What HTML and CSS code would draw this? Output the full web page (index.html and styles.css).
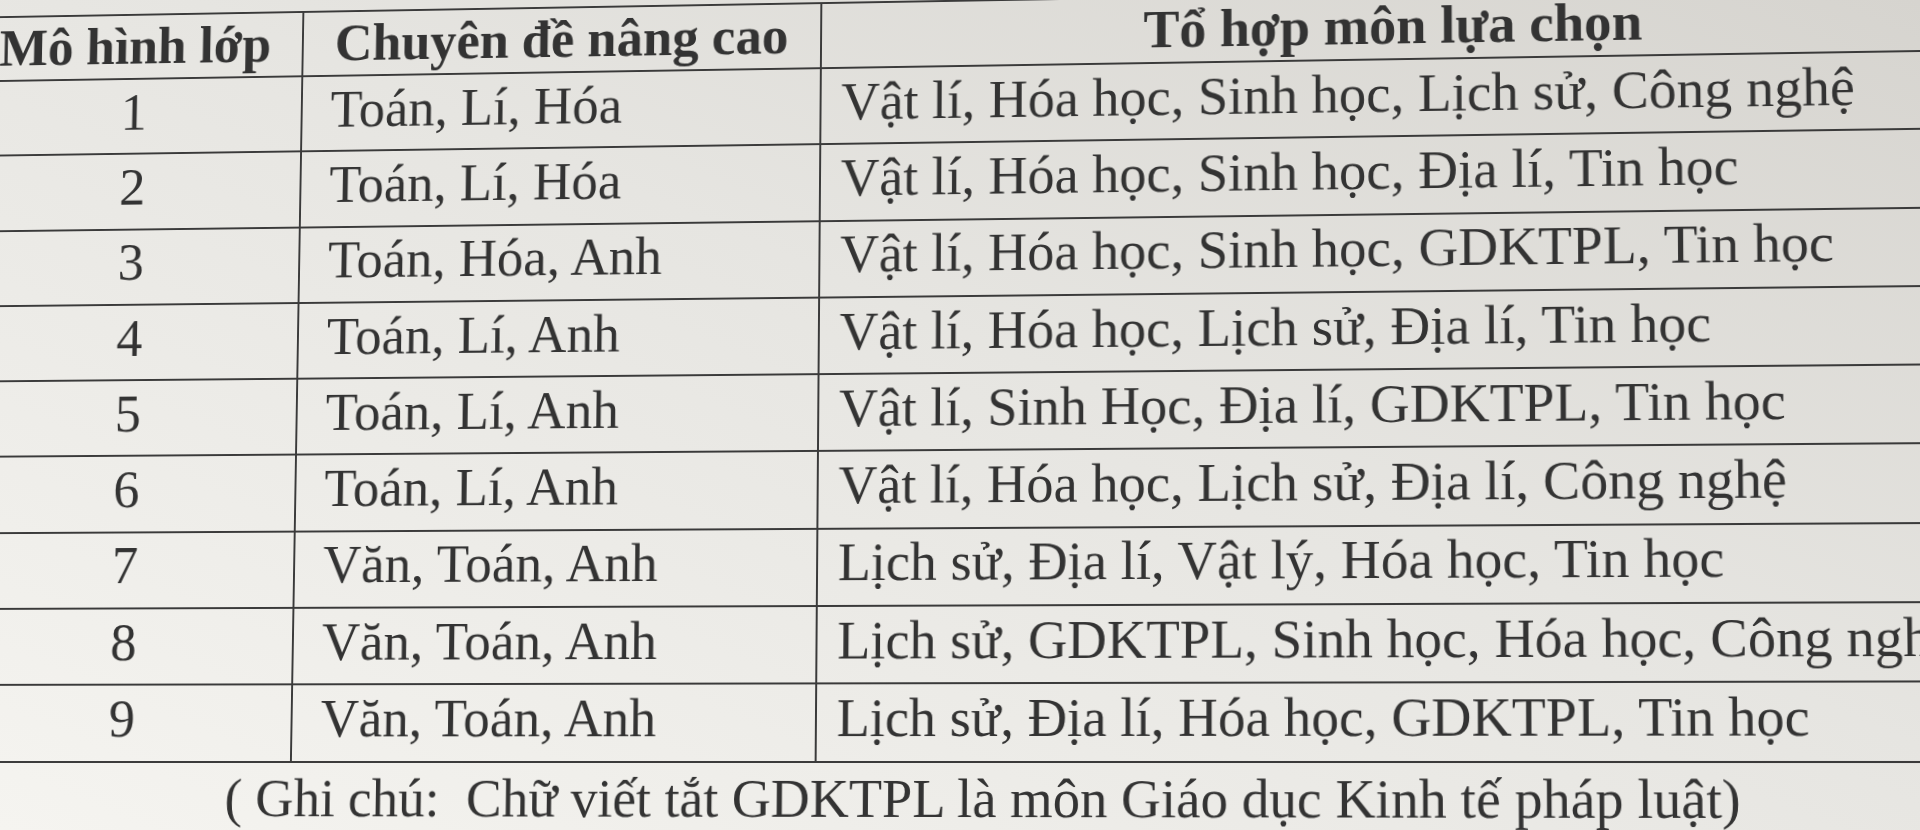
FILE: index.html
```html
<!DOCTYPE html>
<html lang="vi">
<head>
<meta charset="utf-8">
<title>Mô hình lớp</title>
<link rel="stylesheet" href="styles.css">
</head>
<body>
<div class="sheet">
  <div class="grid" role="table">
    <div class="cell head" role="columnheader">Mô hình lớp</div>
    <div class="cell head" role="columnheader">Chuyên đề nâng cao</div>
    <div class="cell head head-combo" role="columnheader">Tổ hợp môn lựa chọn</div>

    <div class="cell num">1</div><div class="cell topic">Toán, Lí, Hóa</div><div class="cell combo">Vật lí, Hóa học, Sinh học, Lịch sử, Công nghệ</div>
    <div class="cell num">2</div><div class="cell topic">Toán, Lí, Hóa</div><div class="cell combo">Vật lí, Hóa học, Sinh học, Địa lí, Tin học</div>
    <div class="cell num">3</div><div class="cell topic">Toán, Hóa, Anh</div><div class="cell combo">Vật lí, Hóa học, Sinh học, GDKTPL, Tin học</div>
    <div class="cell num">4</div><div class="cell topic">Toán, Lí, Anh</div><div class="cell combo">Vật lí, Hóa học, Lịch sử, Địa lí, Tin học</div>
    <div class="cell num">5</div><div class="cell topic">Toán, Lí, Anh</div><div class="cell combo">Vật lí, Sinh Học, Địa lí, GDKTPL, Tin học</div>
    <div class="cell num">6</div><div class="cell topic">Toán, Lí, Anh</div><div class="cell combo">Vật lí, Hóa học, Lịch sử, Địa lí, Công nghệ</div>
    <div class="cell num">7</div><div class="cell topic">Văn, Toán, Anh</div><div class="cell combo">Lịch sử, Địa lí, Vật lý, Hóa học, Tin học</div>
    <div class="cell num">8</div><div class="cell topic">Văn, Toán, Anh</div><div class="cell combo">Lịch sử, GDKTPL, Sinh học, Hóa học, Công nghệ</div>
    <div class="cell num">9</div><div class="cell topic">Văn, Toán, Anh</div><div class="cell combo">Lịch sử, Địa lí, Hóa học, GDKTPL, Tin học</div>
  </div>
  <p class="note">( Ghi chú:&nbsp; Chữ viết tắt GDKTPL là môn Giáo dục Kinh tế pháp luật)</p>
</div>
</body>
</html>
```

FILE: styles.css
```css
html, body {
  margin: 0;
  padding: 0;
  width: 1920px;
  height: 830px;
  overflow: hidden;
}

body {
  background: linear-gradient(to bottom left, #d6d4cf 0%, #e6e5e1 45%, #f5f4f0 100%);
  font-family: "Liberation Serif", "Times New Roman", serif;
  color: #333333;
}

.sheet {
  width: 1920px;
  margin-top: -11px;
  transform-origin: 960px 773px;
  transform: perspective(2000px) rotateY(-2.57deg) rotateX(2deg) skewX(-0.2deg);
  filter: blur(0.4px);
}

.grid {
  display: grid;
  grid-template-columns: 352px 535px 1132px;
  grid-template-rows: 67px repeat(9, 78.3px);
  width: 2021px;
  margin-left: -73px;
  border-top: 2px solid #3a3a3a;
  border-left: 2px solid #3a3a3a;
}

.cell {
  box-sizing: border-box;
  border-right: 2px solid #3a3a3a;
  border-bottom: 2px solid #3a3a3a;
  display: flex;
  align-items: center;
  white-space: nowrap;
  overflow: hidden;
  font-size: 54.5px;
  line-height: 60px;
  padding-bottom: 9px;
}

.head {
  justify-content: center;
  font-weight: bold;
  font-size: 54.2px;
  line-height: 56px;
  padding-bottom: 2px;
}

.head-combo { padding-left: 17px; }

.num { justify-content: center; }
.topic { padding-left: 29px; }
.combo { padding-left: 20px; }

.note {
  margin: 6px 0 0 0;
  padding-left: 20px;
  font-size: 54.5px;
  line-height: 60px;
  text-align: center;
  white-space: nowrap;
}
```
